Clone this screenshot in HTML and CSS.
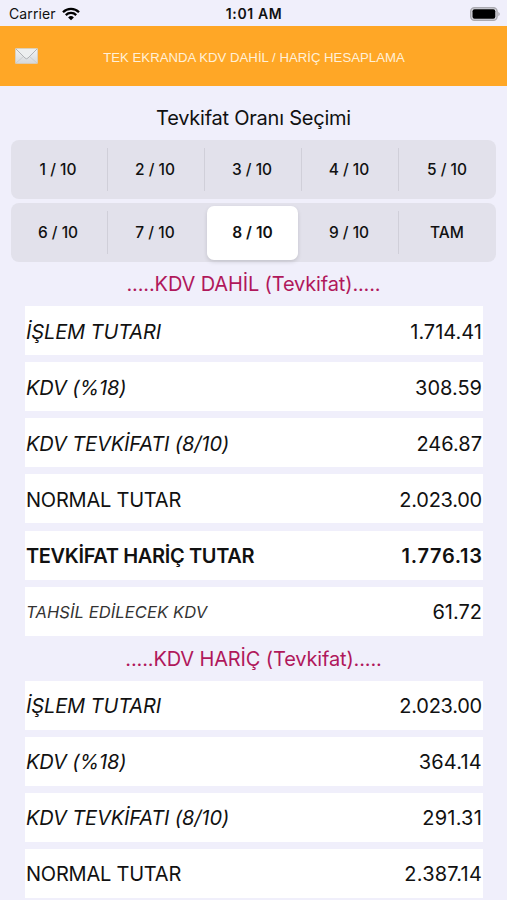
FILE: index.html
```html
<!DOCTYPE html>
<html lang="tr">
<head>
<meta charset="utf-8">
<title>KDV Hesaplama</title>
<link rel="stylesheet" href="styles.css">
</head>
<body>
<div class="status">
  <div class="carrier"><span>Carrier</span>
    <svg width="18" height="14" viewBox="0 0 18 14"><path d="M9 13.3L6.1 10.4A4.2 4.2 0 0 1 11.9 10.4Z"/><path d="M3.8 8.1A7.4 7.4 0 0 1 14.2 8.1M1 5.2A11.3 11.3 0 0 1 17 5.2" fill="none" stroke="#000" stroke-width="2.3"/></svg>
  </div>
  <div class="clock">1:01 AM</div>
  <svg class="battery" width="31" height="14" viewBox="0 0 31 14"><rect x=".7" y=".7" width="26.4" height="12.6" rx="3.8" fill="#dddce4" stroke="#aaa9b0" stroke-width="1.4"/><rect x="2.5" y="2.2" width="22.8" height="9.6" rx="2"/><path d="M28.3 4.7q3 2.3 0 4.6z" fill="#aaa9b0"/></svg>
</div>
<header class="bar">
  <svg class="mail" width="23" height="16" viewBox="0 0 23 16">
    <defs><linearGradient id="paper" x2="0" y2="1"><stop stop-color="#f3f4f5"/><stop offset="1" stop-color="#d5d8db"/></linearGradient></defs>
    <rect x=".4" y=".4" width="22.2" height="15.2" rx=".8" fill="url(#paper)" stroke="#d2cfc8" stroke-width=".8"/>
    <path d="M1 15L8.5 8.5M22 15L14.5 8.5" stroke="#c3c7ca" stroke-width=".7" fill="none"/>
    <path d="M1 1L10 10Q11.5 11.5 13 10L22 1" fill="#eceeef" stroke="#a9adb0" stroke-width=".9"/>
  </svg>
  <h1 class="title">TEK EKRANDA KDV DAHİL / HARİÇ HESAPLAMA</h1>
</header>
<main>
  <h2 class="heading">Tevkifat Oranı Seçimi</h2>
  <div class="seg"><span>1 / 10</span><span>2 / 10</span><span>3 / 10</span><span>4 / 10</span><span>5 / 10</span></div>
  <div class="seg"><span>6 / 10</span><span class="nodiv">7 / 10</span><span class="on">8 / 10</span><span>9 / 10</span><span>TAM</span></div>
  <h3 class="section">.....KDV DAHİL (Tevkifat).....</h3>
  <div class="rows">
    <div class="row"><i>İŞLEM TUTARI</i><span>1.714.41</span></div>
    <div class="row"><i>KDV (%18)</i><span>308.59</span></div>
    <div class="row"><i>KDV TEVKİFATI (8/10)</i><span>246.87</span></div>
    <div class="row"><span class="label">NORMAL TUTAR</span><span class="tight">2.023.00</span></div>
    <div class="row bold"><span class="label">TEVKİFAT HARİÇ TUTAR</span><span class="wide">1.776.13</span></div>
    <div class="row"><i class="small">TAHSİL EDİLECEK KDV</i><span>61.72</span></div>
  </div>
  <h3 class="section second">.....KDV HARİÇ (Tevkifat).....</h3>
  <div class="rows">
    <div class="row"><i>İŞLEM TUTARI</i><span class="tight">2.023.00</span></div>
    <div class="row"><i>KDV (%18)</i><span class="loose">364.14</span></div>
    <div class="row"><i>KDV TEVKİFATI (8/10)</i><span class="loose">291.31</span></div>
    <div class="row"><span class="label">NORMAL TUTAR</span><span class="loose">2.387.14</span></div>
  </div>
</main>
</body>
</html>
```
FILE: styles.css
```css
* { box-sizing: border-box; }
body { margin: 0; height: 900px; overflow: hidden; background: #f0effb; color: #111; font-family: Inter, "Liberation Sans", sans-serif; }
h1, h2, h3 { margin: 0; font-weight: 400; }
.status { height: 26px; display: grid; grid-template-columns: 1fr auto 1fr; align-items: center; padding: 1px 6px 0 9px; font-size: 14px; }
.carrier { display: flex; align-items: center; gap: 6px; letter-spacing: .1px; }
.clock { font-weight: 600; letter-spacing: .6px; margin-right: 2px; }
.battery { justify-self: end; }
.bar { height: 60px; background: #ffa726; display: grid; grid-template-columns: 38px 1fr 37px; align-items: center; }
.mail { justify-self: end; }
.title { text-align: center; font: 13.2px "Liberation Sans", sans-serif; color: #fff0d8; white-space: nowrap; padding-top: 3px; }
.heading { height: 54px; padding-top: 9px; line-height: 46px; font-size: 20px; letter-spacing: -.23px; text-align: center; }
.seg { height: 59px; margin: 0 11px 4px; border-radius: 8px; background: #e2e1eb; display: grid; grid-template-columns: repeat(5, 1fr); align-items: center; font-size: 15.5px; font-weight: 500; text-align: center; }
.seg span { height: 43px; line-height: 43px; padding-right: 2px; border-right: 1px solid #d0cfd9; }
.seg span:last-child, .seg .nodiv { border-color: transparent; }
.seg span:last-child { padding: 0; }
.seg .on { height: 54px; line-height: 54px; margin: 0 4px 0 2px; padding: 0; border: 0; border-radius: 7px; background: #fff; font-weight: 600; box-shadow: 0 2px 4px #0002; }
.section { height: 40px; line-height: 37px; font-size: 20px; letter-spacing: -.14px; text-align: center; color: #b0185b; }
.second { height: 44.8px; line-height: 46px; }
.rows { display: grid; gap: 7.15px; margin: 0 24px 0 25px; }
.row { height: 49px; padding: 2px 1px 0; background: #fff; display: flex; align-items: center; justify-content: space-between; font-size: 20px; }
.row i { letter-spacing: -.1px; }
.row .label { letter-spacing: -.22px; }
.row .tight { letter-spacing: -.25px; }
.row .loose { letter-spacing: .2px; }
.bold { font-weight: 600; }
.bold .label { letter-spacing: -.35px; }
.bold .wide { letter-spacing: .7px; margin-right: -.7px; }
.row .small { font-size: 16.5px; letter-spacing: .12px; color: #333; }
```
